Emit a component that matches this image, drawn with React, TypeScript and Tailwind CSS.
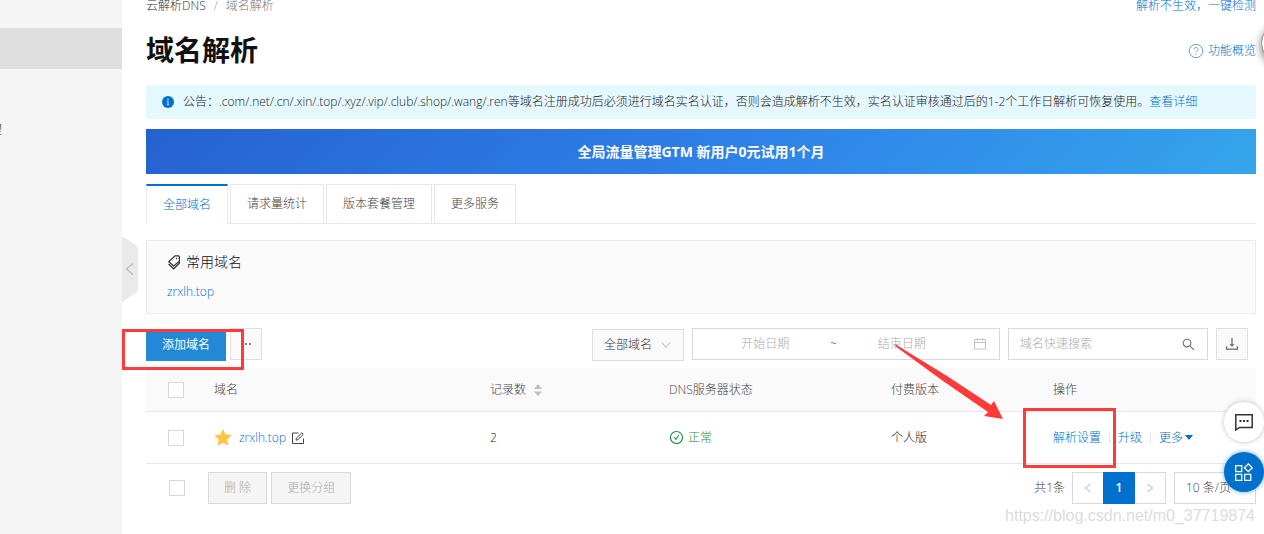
import { AiOutlineCheckCircle, AiOutlineLeft, AiOutlineRight, AiOutlineSearch } from 'react-icons/ai';

const tabs = ['全部域名', '请求量统计', '版本套餐管理', '更多服务'];

const domains = [{ name: 'zrxlh.top', records: 2, status: '正常', edition: '个人版' }];

function Checkbox({ label }: { label: string }) {
  return (
    <input
      type="checkbox"
      aria-label={label}
      className="block w-4 h-4 appearance-none border border-[#d9d9d9] bg-white checked:bg-[#0070cc]"
    />
  );
}

function ChevronDown({ className }: { className: string }) {
  return (
    <svg viewBox="0 0 10 8" className={`w-[10px] h-2 pointer-events-none ${className}`} fill="none" stroke="#b5b5b5">
      <path d="M1 1.5l4 5 4-5" />
    </svg>
  );
}

function Sidebar() {
  return (
    <aside className="w-[122px] shrink-0 bg-[#f5f5f5] pt-7 overflow-hidden">
      <nav>
        <a href="#dns" aria-label="域名解析" aria-current="page" className="block h-[41px] bg-[#dedede]" />
        <a href="#manage" className="flex h-[41px] mt-10 -ml-[10px] items-center text-[#333]">
          理
        </a>
      </nav>
    </aside>
  );
}

function PageHeader() {
  return (
    <header>
      <div className="flex h-[11px] items-center justify-between leading-3">
        <nav className="flex gap-2">
          <a href="#home" className="text-[#333]">云解析DNS</a>
          <span className="text-[#999]">/</span>
          <span className="text-[#777]">域名解析</span>
        </nav>
        <a href="#check" className="text-[#0070cc]">解析不生效，一键检测</a>
      </div>
      <div className="flex mt-5 h-10 items-center justify-between">
        <h1 className="text-[28px] font-bold text-[#111]">域名解析</h1>
        <a href="#overview" className="flex items-center gap-1 text-[#0070cc]">
          <svg viewBox="0 0 16 16" className="w-4 h-4" fill="none" stroke="#6f9fd4">
            <circle cx="8" cy="8" r="6.7" />
            <path d="M6 6.4c0-2.7 4-2.7 4 0 0 1.4-2 1.4-2 3M8 10.8v1.2" />
          </svg>
          功能概览
        </a>
      </div>
    </header>
  );
}

function Notice() {
  return (
    <div className="flex mt-[14px] h-[34px] items-center gap-[9px] bg-[#e5f8ff] px-4 text-[#222]">
      <svg viewBox="0 0 12 12" className="w-3 h-3 shrink-0">
        <circle cx="6" cy="6" r="6" fill="#0070cc" />
        <path d="M5.3 2.6h1.4v1.2H5.3zM5.5 4.8h1V9h-1zM4.8 4.8h1v.6h-1zM4.8 8.6h2.4v.6H4.8z" fill="#d5ebfa" />
      </svg>
      <p className="whitespace-nowrap">
        公告：.com/.net/.cn/.xin/.top/.xyz/.vip/.club/.shop/.wang/.ren等域名注册成功后必须进行域名实名认证，否则会造成解析不生效，实名认证审核通过后的1-2个工作日解析可恢复使用。
        <a href="#detail" className="text-[#0070cc]">查看详细</a>
      </p>
    </div>
  );
}

function Tabs() {
  return (
    <div role="tablist" className="flex mt-[10px] gap-[2px] border-b border-[#e6e9ed]">
      {tabs.map((tab, i) => (
        <button
          key={tab}
          role="tab"
          aria-selected={i === 0}
          className={`h-10 -mb-px px-4 border bg-white ${
            i === 0
              ? 'border-[#e6e9ed] border-t-2 border-t-[#0070cc] border-b-white text-[#0070cc]'
              : 'border-[#e3e8ed] text-[#444]'
          }`}
        >
          {tab}
        </button>
      ))}
    </div>
  );
}

function CommonDomains() {
  return (
    <section className="mt-4 h-[74px] border border-[#ebebeb] bg-[#fafafa] px-5 pt-[11px]">
      <h2 className="flex h-5 items-center gap-[5px] text-sm font-light text-[#111]">
        <svg viewBox="0 0 14 15" className="w-[14px] h-[15px]" fill="none" stroke="#333" strokeWidth="1.2">
          <path d="M8 .9h3.600l.8.8v4.600L6.700 11 1.800 6.800z" />
          <path d="M1.600 9l5 4.800 5.800-5.600V6.500" />
          <circle cx="9.600" cy="3.600" r=".8" fill="#333" stroke="none" />
        </svg>
        常用域名
      </h2>
      <a href="#domain" className="inline-block mt-[10px] leading-5 text-[#0070cc]">zrxlh.top</a>
    </section>
  );
}

function Toolbar() {
  return (
    <div className="flex mt-[14px] h-[33px] items-start pr-2 gap-2 text-[#333]">
      <div className="flex flex-1 gap-1">
        <div className="relative pt-px">
          <button className="w-20 h-8 bg-[#2389d7] font-normal text-white">添加域名</button>
          <div className="absolute -left-6 top-px w-[122px] h-[41px] border-3 border-[#ff3a3a] pointer-events-none z-10" />
        </div>
        <button aria-label="更多操作" className="flex w-8 h-8 items-center justify-center border border-[#dedede] bg-[#fafafa]">
          <svg viewBox="0 0 10 2" className="w-[10px] h-[2px]" fill="#888">
            <path d="M0 0h2v2H0zM4 0h2v2H4zM8 0h2v2H8z" />
          </svg>
        </button>
      </div>
      <div className="relative w-[92px] pt-px">
        <select aria-label="域名分组" className="block w-full h-8 appearance-none border border-[#dedede] bg-[#fafafa] pl-[11px]">
          <option>全部域名</option>
        </select>
        <ChevronDown className="absolute right-[13px] top-[13px]" />
      </div>
      <div className="flex w-[308px] h-8 items-center border border-[#d9d9d9] bg-white pl-2 pr-3">
        <input aria-label="开始日期" placeholder="开始日期" className="w-0 flex-1 text-center outline-none placeholder:text-[#aaa]" />
        <span className="w-2 text-center">~</span>
        <input aria-label="结束日期" placeholder="结束日期" className="w-0 flex-1 text-center outline-none placeholder:text-[#aaa]" />
        <svg viewBox="0 0 12 12" className="ml-2 mr-px w-3 h-3" fill="none" stroke="#c4c4c4">
          <path d="M.5 1.500h11v9.500H.5zM.5 4.500h11M3.500 0v2.500M8.500 0v2.500" />
        </svg>
      </div>
      <div className="flex w-[200px] h-8 items-center border border-[#d9d9d9] bg-white px-[11px]">
        <input aria-label="域名快速搜索" placeholder="域名快速搜索" className="w-0 flex-1 outline-none placeholder:text-[#aaa]" />
        <AiOutlineSearch className="w-[15px] h-[15px] text-[#777]" />
      </div>
      <button aria-label="下载" className="flex w-8 h-8 items-center justify-center border border-[#dedede] bg-[#fafafa]">
        <svg viewBox="0 0 12 12" className="w-3 h-3" fill="none" stroke="#666" strokeWidth="1.2">
          <path d="M6 0v8M4.300 6.200L6 8l1.700-1.800M.6 8.200v3h10.800v-3" />
        </svg>
      </button>
    </div>
  );
}

function DomainTable() {
  return (
    <table className="w-full table-fixed mt-[7px] border-separate border-spacing-0 text-left">
      <colgroup>
        <col className="w-[52px]" />
        <col className="w-[276px]" />
        <col className="w-[179px]" />
        <col className="w-[222px]" />
        <col className="w-[162px]" />
        <col className="w-[219px]" />
      </colgroup>
      <thead>
        <tr className="h-11 bg-[#fafafa] text-[#444] *:border-b *:border-[#e8e8e8] *:font-light">
          <th className="pl-[22px]"><Checkbox label="全选" /></th>
          <th className="px-4">域名</th>
          <th className="px-4">
            <button className="flex items-center gap-2">
              记录数
              <svg viewBox="0 0 8 12" className="w-2 h-3" fill="#bfbfbf">
                <path d="M0 5l4-5 4 5zM0 7.5h8l-4 4.5z" />
              </svg>
            </button>
          </th>
          <th className="px-4">DNS服务器状态</th>
          <th className="px-4">付费版本</th>
          <th className="px-4">操作</th>
        </tr>
      </thead>
      <tbody>
        {domains.map((d) => (
          <tr key={d.name} className="h-[52px] text-[#222] *:border-b *:border-[#e8e8e8]">
            <td className="pl-[22px]"><Checkbox label={d.name} /></td>
            <td className="px-4">
              <div className="flex items-center">
                <svg viewBox="0 0 18 17" className="w-[18px] h-[17px]" fill="#ffc440">
                  <path d="M9 0l2.6 5.6 6.2.7-4.6 4.2L14.500 16.800 9 13.700 3.500 16.800l1.300-6.300L.200 6.300l6.200-.7z" />
                </svg>
                <a href="#domain" className="ml-[7px] text-[#0070cc]">{d.name}</a>
                <button aria-label="编辑备注" className="ml-[6px]">
                  <svg viewBox="0 0 12 12" className="w-3 h-3" fill="none" stroke="#444">
                    <path d="M6.500 1h-6v10.500h11v-5" />
                    <path d="M4 8.200l.4-2L9.800.8l1.500 1.500-5.400 5.400z" />
                  </svg>
                </button>
              </div>
            </td>
            <td className="px-4">{d.records}</td>
            <td className="px-4">
              <span className="flex items-center gap-1 text-[#1e8e3e]">
                <AiOutlineCheckCircle className="w-[15px] h-[15px]" />
                {d.status}
              </span>
            </td>
            <td className="px-4">{d.edition}</td>
            <td className="px-4">
              <div className="flex items-center gap-2 whitespace-nowrap text-[#0070cc]">
                <div className="relative">
                  <a href="#settings">解析设置</a>
                  <div className="absolute -left-[30px] -top-[22px] w-[93px] h-[60px] border-3 border-[#ff3a3a] pointer-events-none" />
                </div>
                <span className="w-px h-[10px] bg-[#e3e3e3]" />
                <a href="#upgrade">升级</a>
                <span className="w-px h-[10px] bg-[#e3e3e3]" />
                <button className="flex items-center gap-[2px]">
                  更多
                  <svg viewBox="0 0 8 5" className="w-2 h-[5px]" fill="#0070cc">
                    <path d="M0 0h8L4 5z" />
                  </svg>
                </button>
              </div>
            </td>
          </tr>
        ))}
      </tbody>
    </table>
  );
}

function TableFooter() {
  return (
    <footer className="flex mt-2 h-8 items-center pl-[23px] text-[#444]">
      <Checkbox label="选择全部域名" />
      <button disabled className="ml-[23px] h-8 px-[15px] border border-[#d9d9d9] bg-[#f5f5f5] text-[#aaa]">删 除</button>
      <button disabled className="ml-1 h-8 px-[15px] border border-[#d9d9d9] bg-[#f5f5f5] text-[#aaa]">更换分组</button>
      <span className="ml-auto mr-[7px]">共1条</span>
      <nav className="flex h-8 *:flex *:items-center *:justify-center">
        <button aria-label="上一页" className="w-[31px] border border-r-0 border-[#d9d9d9] text-[#bbb]">
          <AiOutlineLeft className="w-3 h-3" />
        </button>
        <button aria-current="page" className="w-8 bg-[#0070cc] font-semibold text-white">1</button>
        <button aria-label="下一页" className="w-[31px] border border-l-0 border-[#d9d9d9] text-[#bbb]">
          <AiOutlineRight className="w-3 h-3" />
        </button>
      </nav>
      <div className="relative w-[82px] ml-2">
        <select aria-label="每页条数" className="w-full h-8 appearance-none border border-[#d9d9d9] bg-white pl-[11px]">
          <option>10 条/页</option>
        </select>
      </div>
    </footer>
  );
}

/* Everything that floats over the page */
function Floating() {
  return (
    <>
      <svg viewBox="0 0 108 74" className="absolute top-[345px] right-[261px] w-[108px] h-[74px] pointer-events-none" fill="#ff3a3a">
        <path d="M0 1L1.500 0 52 31 96 60l3-4 9 18-19-3 4-4L48 36z" />
      </svg>
      <div className="absolute top-[22px] -right-[39px] w-[42px] h-[42px] rounded-full border border-[#aaa] bg-[#2d6b55] ring-2 ring-inset ring-white shadow-[0_3px_8px_rgba(0,0,0,0.5)]" />
      <button aria-label="在线咨询" className="absolute top-[402px] right-0 flex w-10 h-10 items-center justify-center rounded-full bg-white shadow-[0_0_5px_rgba(0,0,0,0.25)]">
        <svg viewBox="0 0 18 17" className="w-[18px] h-[17px]" fill="none" stroke="#333" strokeWidth="1.500">
          <path d="M.8.8h16.400v12.700H4.500L.8 16z" />
          <path d="M4.500 7h2M8 7h2M11.500 7h2" strokeWidth="2" />
        </svg>
      </button>
      <button aria-label="应用中心" className="absolute top-[452px] right-0 flex w-10 h-10 items-center justify-center rounded-full bg-[#0070cc] shadow-[0_0_5px_rgba(0,112,204,0.6)]">
        <svg viewBox="0 0 18 18" className="w-[18px] h-[18px]" fill="none" stroke="#fff" strokeWidth="1.300">
          <path d="M.7 2.700h6v6h-6zM.7 11.300h6v6h-6zM9.700 11.300h6v6h-6zM13.300.9l3.900 3.900-3.900 3.900-3.900-3.900z" />
        </svg>
      </button>
      <span className="absolute top-[506px] right-[9px] font-['Liberation_Sans',sans-serif] text-base leading-5 text-[#dcdcdc] pointer-events-none">
        https://blog.csdn.net/m0_37719874
      </span>
    </>
  );
}

export default function App() {
  return (
    <div className="relative flex min-h-screen overflow-hidden bg-white font-['Open_Sans','Noto_Sans_CJK_SC',sans-serif] text-xs font-light">
      <Sidebar />
      <main className="relative flex-1 min-w-0 pl-6 pr-2">
        <button aria-label="收起导航" className="absolute left-0 top-[236px] w-4 h-[66px]">
          <svg viewBox="0 0 16 66" className="w-4 h-[66px]">
            <path d="M0 0l14 9q2 1.500 2 4v40q0 2.500-2 4L0 66z" fill="#eaeaea" />
            <path d="M11 27.500L4.500 33l6.500 5.500" fill="none" stroke="#bbb" strokeWidth="1.200" />
          </svg>
        </button>
        <PageHeader />
        <Notice />
        <a href="#gtm" className="flex mt-[10px] h-[45px] items-center justify-center bg-linear-135 from-[#2562d0] via-[#2f7fe8] to-[#35a5ec] text-sm font-bold text-white">
          全局流量管理GTM 新用户0元试用1个月
        </a>
        <Tabs />
        <CommonDomains />
        <Toolbar />
        <DomainTable />
        <TableFooter />
      </main>
      <Floating />
    </div>
  );
}
